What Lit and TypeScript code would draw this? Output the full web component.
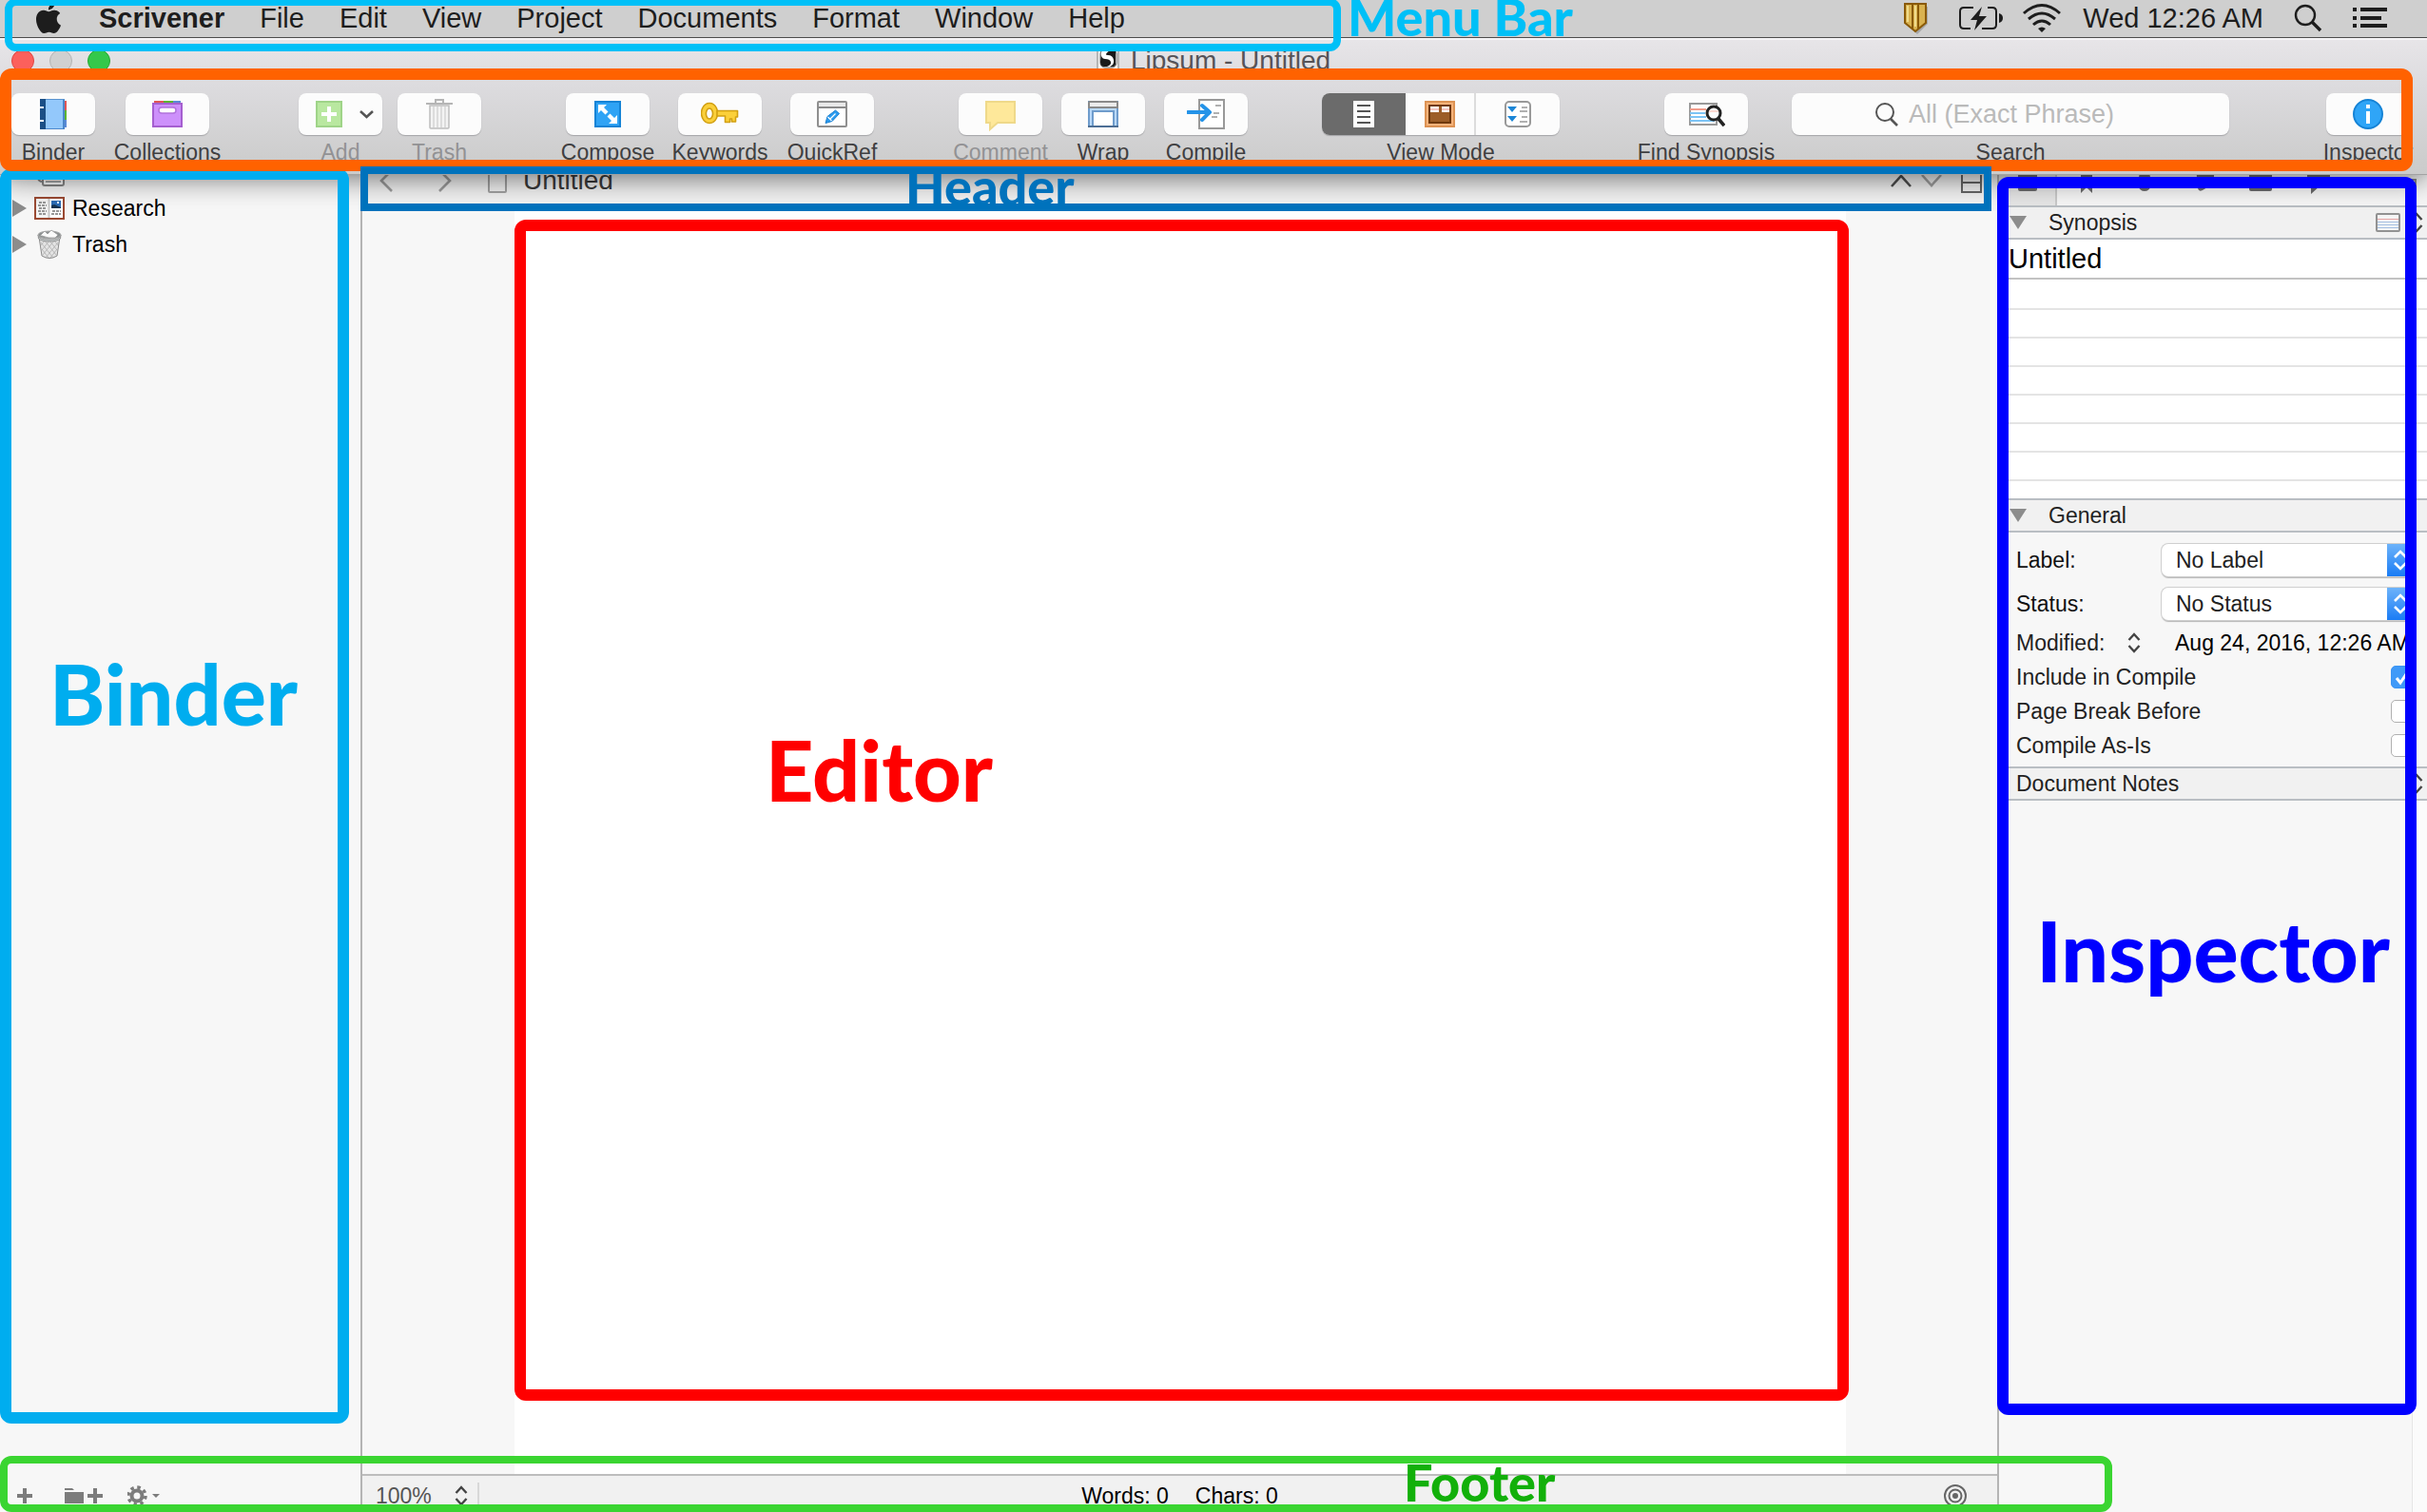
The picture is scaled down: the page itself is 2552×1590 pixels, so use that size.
import { LitElement, html, css, svg, nothing } from "lit";
import { customElement, property, state } from "lit/decorators.js";
import { classMap } from "lit/directives/class-map.js";

const MENUS = ["File", "Edit", "View", "Project", "Documents", "Format", "Window", "Help"];

const ICONS: Record<string, unknown> = {
  binder: svg`
    <rect x="11" y="2" width="21" height="32" fill="#93c8fb" />
    <rect x="30" y="2" width="2" height="32" fill="#4b87cc" />
    <rect x="11" y="2" width="21" height="1" fill="#5b94cf" /><rect x="11" y="33" width="21" height="1" fill="#4b87cc" />
    <rect x="6" y="2" width="6" height="32" fill="#1b4f86" />
    <rect x="6" y="10" width="4" height="2" fill="#fff" /><rect x="6" y="24" width="4" height="2" fill="#fff" />
    <rect x="32" y="4" width="2" height="10" fill="#e05555" /><rect x="32" y="14" width="2" height="10" fill="#5cb531" /><rect x="32" y="24" width="2" height="8" fill="#5b8ad6" />`,
  collections: svg`
    <rect x="6" y="4" width="10" height="3" fill="#e05555" /><rect x="16" y="4" width="10" height="3" fill="#5cb531" /><rect x="26" y="4" width="8" height="3" fill="#5b8ad6" />
    <rect x="5" y="7" width="30" height="24" fill="#cd90fb" stroke="#a55fd0" stroke-width="2" />
    <rect x="11" y="11" width="18" height="6" rx="3" fill="#fff" stroke="#b173dc" stroke-width="1.5" />`,
  add: svg`
    <rect x="19" y="5" width="26" height="26" fill="#b9e8a0" stroke="#9fd488" stroke-width="2" />
    <path d="M32 10v16M24 18h16" stroke="#fff" stroke-width="4" />
    <path d="M65 15l6.500 6l6.500 -6" fill="none" stroke="#555" stroke-width="2.600" />`,
  trash: svg`
    <path d="M16 6V3h8v3" fill="none" stroke="#b5b5b5" stroke-width="2" />
    <path d="M6 7h28" stroke="#b5b5b5" stroke-width="2" />
    <path d="M10 9h20v23q0 1-1 1H11q-1 0-1-1z" fill="#f3f3f3" stroke="#bdbdbd" stroke-width="1.500" />
    <path d="M14 10v22M18 10v22M22 10v22M26 10v22" stroke="#dcdcdc" stroke-width="2" />`,
  compose: svg`
    <rect x="7" y="5" width="26" height="26" fill="#2fa3f5" stroke="#1583d6" stroke-width="2" />
    <path d="M10 8h9l-3 3l4.500 4.500l-3 3L13 14l-3 3zM30 28h-9l3-3l-4.500-4.500l3-3L27 22l3-3z" fill="#fff" stroke="none" />`,
  key: svg`
    <path d="M9 6.500a8.500 10.500 0 1 0 .1 0zM9 12a3.500 5.500 0 1 1-.1 0z" fill="#fbd03a" stroke="#d2a012" stroke-width="1.600" fill-rule="evenodd" />
    <path d="M17 14.500h21.500v6.500h-2v5h-4v-3h-2v3.500h-5v-6.500H17z" fill="#fbd03a" stroke="#d2a012" stroke-width="1.600" stroke-linejoin="round" />`,
  quickref: svg`
    <rect x="5" y="5" width="30" height="26" rx="1" fill="#fff" stroke="#8f8f8f" stroke-width="2" />
    <rect x="6" y="6" width="28" height="4" fill="#e9e9e9" /><path d="M5 11h30" stroke="#8a8a8a" stroke-width="2" />
    <path d="M13 27.500l2-7l8.500-6.500l4 3.500l-7.500 8z" fill="#2b9bef" stroke="#1b7fd0" />
    <path d="M15.500 21l4 4M17.500 23.500l6-6" stroke="#fff" stroke-width="1.200" />`,
  comment: svg`<path d="M5 5h30v22H17l-8 7v-7H5z" fill="#fee89a" stroke="#efd98a" stroke-width="2" />`,
  wrap: svg`
    <rect x="5" y="5" width="30" height="26" fill="#b9d9fa" stroke="#6f9ccc" stroke-width="2" />
    <path d="M4 12V6q0-2 2-2h28q2 0 2 2v6z" fill="#8a8a8a" /><rect x="6" y="6" width="28" height="4" fill="#ececec" />
    <rect x="9" y="15" width="22" height="16" fill="#fff" stroke="#6f9ccc" stroke-width="2" />
    <path d="M4 31h32" stroke="#4d6f96" stroke-width="2" />`,
  compile: svg`
    <rect x="13" y="3" width="26" height="30" fill="#fff" stroke="#999" stroke-width="2" />
    <path d="M30 9h6M28 17h6M26 21h6" stroke="#b0b0b0" stroke-width="2" />
    <path d="M1 16h22M16 9l8 7l-8 8" fill="none" stroke="#2493e8" stroke-width="4" stroke-linecap="round" stroke-linejoin="round" />`,
  doc: svg`
    <rect x="9" y="4" width="22" height="28" fill="#fff" />
    <path d="M13 9h14M13 15h14M13 21h14M13 27h14" stroke="#555" stroke-width="2" />`,
  cork: svg`
    <rect x="5" y="5" width="30" height="26" fill="#f5b27a" stroke="#dd9354" stroke-width="2" />
    <rect x="9" y="9" width="22" height="18" fill="#9c5d27" stroke="#70390d" stroke-width="2" />
    <rect x="10" y="10" width="9" height="6" fill="#fff" /><rect x="22" y="10" width="8" height="6" fill="#fff" />
    <path d="M10 13h9M22 13h8" stroke="#f6c6c0" stroke-width="2" />`,
  outline: svg`
    <rect x="7" y="5" width="26" height="26" rx="4" fill="#fff" stroke="#999" stroke-width="2" />
    <path d="M9 10h10l-5 6zM9 20h10l-5 6z" fill="#1c86d6" />
    <path d="M24 11h6M22 15h8M24 21h6M22 26h8" stroke="#b0b0b0" stroke-width="2" />`,
  synopsis: svg`
    <rect x="3" y="7" width="28" height="22" fill="#fff" stroke="#999" stroke-width="2" />
    <path d="M3 13h17" stroke="#f09c8c" stroke-width="2" /><path d="M3 17h16M3 21h17M3 25h26" stroke="#7cc4f5" stroke-width="2" />
    <circle cx="28" cy="17" r="7" fill="#fbfbfb" stroke="#222" stroke-width="3" />
    <path d="M23 15h10" stroke="#fbd8d0" stroke-width="2" />
    <path d="M33 23l6 7" stroke="#222" stroke-width="3.600" />`,
  info: svg`
    <circle cx="20" cy="18" r="15" fill="#2fa5f7" stroke="#1583d6" stroke-width="2" />
    <rect x="18" y="8" width="4" height="4" fill="#fff" /><rect x="18" y="15" width="4" height="13" fill="#fff" />`,
};

const stepper = () => html`<svg width="14" height="22" viewBox="0 0 14 22" aria-hidden="true">
  <path d="M1.500 8L7 2l5.500 6M1.500 14L7 20l5.500 -6" fill="none" stroke="#444" stroke-width="2.400" />
</svg>`;

@customElement("tool-button")
class ToolButton extends LitElement {
  @property() label = "";
  @property() icon = "";
  @property({ type: Boolean }) disabled = false;

  static styles = css`
    :host {
      display: block;
      width: 88px;
      flex: none;
    }
    .tool {
      display: flex;
      flex-direction: column;
      align-items: center;
      gap: 5px;
      width: 100%;
      padding: 0;
      border: 0;
      background: none;
      color: #3f3f41;
      font: 23px/26px "Liberation Sans", Arial, sans-serif;
      white-space: nowrap;
    }
    .tool:disabled {
      color: #929294;
    }
    .face {
      display: flex;
      align-items: center;
      justify-content: center;
      width: 100%;
      height: 44px;
      border-radius: 8px;
      background: #fcfcfc;
      box-shadow: 0 1px 1px #a5a5a8;
    }
  `;

  render() {
    const w = this.icon === "add" ? 88 : 40;
    return html`<button class="tool" ?disabled=${this.disabled}>
      <span class="face">
        <svg width=${w} height="36" viewBox="0 0 ${w} 36" aria-hidden="true">${ICONS[this.icon]}</svg>
      </span>
      <span>${this.label}</span>
    </button>`;
  }
}

@customElement("app-root")
class AppRoot extends LitElement {
  @state() private mode = "doc";

  static styles = css`
    :host {
      display: block;
      position: relative;
      height: 100vh;
      overflow: hidden;
      background: #f7f7f7;
      color: #111;
      font: 23px/28px "Liberation Sans", Arial, sans-serif;
    }
    * {
      box-sizing: border-box;
    }
    svg {
      display: block;
      flex: none;
    }
    button,
    input,
    textarea,
    select {
      font: inherit;
      color: inherit;
      margin: 0;
      padding: 0;
      border: 0;
      border-radius: 0;
      background: none;
      outline: none;
    }
    .app {
      display: flex;
      flex-direction: column;
      height: 100%;
    }

    .menubar {
      display: flex;
      align-items: center;
      gap: 37px;
      height: 40px;
      flex: none;
      padding: 0 42px 2px 35px;
      border-bottom: 1px solid #4c4c4c;
      background: #cfcfcf;
      color: #1d1d1d;
      font-size: 29px;
      line-height: 30px;
      white-space: nowrap;
    }
    .brand {
      font-weight: bold;
    }
    .status {
      display: flex;
      align-items: center;
      gap: 32px;
      margin-left: auto;
    }
    .gauges {
      display: flex;
      align-items: center;
      gap: 20px;
    }
    .clock {
      margin-left: -10px;
    }

    .chrome {
      position: relative;
      z-index: 1;
      height: 144px;
      flex: none;
      border-top: 2px solid #f5f4f6;
      border-bottom: 1px solid #a2a2a2;
      background: linear-gradient(#e7e5e8, #dcdbde 35%, #cdcdcd 90%, #cbcbcb);
      box-shadow: 0 2px 30px rgba(0, 0, 0, 0.6);
      clip-path: inset(0 0 -60px 0);
    }
    .titlebar {
      display: grid;
      grid-template-columns: 1fr auto 1fr;
      align-items: center;
      height: 44px;
      padding: 0 12px;
    }
    .lights {
      display: flex;
      gap: 16px;
    }
    .light {
      width: 24px;
      height: 24px;
      border: 1px solid #df4744;
      border-radius: 50%;
      background: #fc605c;
    }
    .idle {
      border-color: #b4b4b4;
      background: #d0d0d0;
    }
    .zoom {
      border-color: #24a732;
      background: #34c84a;
    }
    .title {
      display: flex;
      align-items: center;
      gap: 12px;
      color: #565358;
      font-size: 28px;
    }
    .tools {
      display: flex;
      align-items: flex-start;
      padding: 12px 18px 0 12px;
    }
    .group {
      display: flex;
      gap: 30px;
    }
    .tight {
      gap: 16px;
    }
    .late {
      gap: 20px;
    }
    .spaced {
      margin-left: 89px;
    }
    .first {
      gap: 32px;
      margin-right: 5px;
    }
    .modes,
    .finder {
      display: flex;
      flex-direction: column;
      align-items: center;
      gap: 5px;
      color: #3f3f41;
      line-height: 26px;
    }
    .modes {
      width: 250px;
      margin-left: 78px;
      margin-right: 110px;
    }
    .segments {
      display: grid;
      grid-template-columns: 88px 74px 1fr;
      width: 100%;
      height: 44px;
      overflow: hidden;
      border-radius: 8px;
      background: #fcfcfc;
      box-shadow: 0 1px 1px #a5a5a8;
    }
    .segment {
      display: flex;
      align-items: center;
      justify-content: center;
    }
    .segment + .segment {
      border-right: 2px solid #dcdcdc;
    }
    .segment:last-child {
      border-right: 0;
    }
    .on {
      background: #6b6b6b;
    }
    .finder {
      flex: 1;
      margin: 0 102px 0 46px;
    }
    .search {
      display: flex;
      align-items: center;
      justify-content: center;
      gap: 10px;
      width: 100%;
      height: 44px;
      border-radius: 8px;
      background: #fcfcfc;
      box-shadow: 0 1px 1px #a5a5a8;
    }
    .query {
      width: 250px;
      font-size: 27px;
    }
    .query::placeholder {
      color: #bababa;
      opacity: 1;
    }

    .body {
      display: grid;
      grid-template-columns: 381px minmax(0, 1fr) 452px;
      flex: 1;
      min-height: 0;
      margin-top: -22px;
    }
    .column {
      display: flex;
      flex-direction: column;
      min-width: 0;
      min-height: 0;
    }
    .binder {
      border-right: 2px solid #b4b4b4;
    }
    .tree {
      flex: 1;
      margin: 0;
      padding: 0;
      list-style: none;
      color: #000;
    }
    .node {
      display: flex;
      align-items: center;
      gap: 8px;
      height: 38px;
      padding-left: 13px;
    }
    .actions {
      display: flex;
      align-items: center;
      gap: 24px;
      height: 38px;
      padding: 4px 0 0 16px;
    }

    .crumbs {
      display: flex;
      align-items: center;
      height: 60px;
      padding: 0 16px 4px 18px;
      flex: none;
      color: #3a3a3a;
      font-size: 28px;
      background: #f3f3f3;
    }
    .nav {
      display: flex;
      gap: 48px;
      margin-right: 38px;
    }
    .docname {
      flex: 1;
      margin-left: 17px;
    }
    .panes {
      display: flex;
      align-items: center;
      gap: 10px;
    }
    .split {
      margin-left: 10px;
    }
    .page {
      width: 1400px;
      max-width: 100%;
      flex: 1;
      align-self: center;
      padding: 40px;
      background: #fff;
      resize: none;
    }
    .statusbar {
      display: grid;
      grid-template-columns: 1fr auto 1fr;
      align-items: center;
      height: 40px;
      flex: none;
      padding: 4px 14px 0;
      border-top: 2px solid #bdbdbd;
      background: #f1f1f1;
      white-space: nowrap;
    }
    .scale {
      display: flex;
      align-items: center;
      gap: 24px;
      color: #555;
    }
    .rule {
      width: 2px;
      height: 28px;
      margin-left: -14px;
      background: #d8d8d8;
    }
    .counts {
      display: flex;
      gap: 28px;
      color: #000;
    }
    .target {
      justify-self: end;
      margin-right: 18px;
    }

    .inspector {
      border-left: 2px solid #b4b4b4;
    }
    .tabs {
      display: flex;
      height: 54px;
      flex: none;
      background: #f6f6f6;
    }
    .tab {
      display: flex;
      align-items: center;
      justify-content: center;
      width: 61px;
    }
    .tab:first-child {
      border-right: 2px solid #c9c9c9;
      background: #e6e6e6;
    }
    .tab:last-child {
      margin-left: auto;
      width: 34px;
    }
    .head {
      display: flex;
      align-items: center;
      gap: 22px;
      height: 36px;
      flex: none;
      margin: 0;
      padding: 0 4px 0 10px;
      border: solid #b9bec3;
      border-width: 2px 0;
      background: #f1f1f1;
      color: #222;
      font: inherit;
    }
    .plain {
      padding-left: 18px;
    }
    .push {
      display: flex;
      align-items: center;
      gap: 10px;
      margin-left: auto;
    }
    .card-title {
      width: 100%;
      height: 42px;
      padding: 0 10px;
      flex: none;
      border-bottom: 2px solid #c2c2c2;
      background: #fff;
      color: #000;
      font-size: 29px;
    }
    .card {
      width: 100%;
      height: 230px;
      flex: none;
      padding: 0 10px;
      background: linear-gradient(#fff, #fff) 0 0 / 100% 30px no-repeat, linear-gradient(#e4e4e4 2px, #fff 2px) 0 0 / 100% 30px;
      line-height: 30px;
      resize: none;
    }
    .fields {
      padding: 6px 14px 4px 18px;
      color: #111;
    }
    .field {
      display: grid;
      grid-template-columns: 153px 1fr;
      align-items: center;
      height: 46px;
    }
    .picker {
      display: grid;
      grid-template-columns: 1fr 28px;
      height: 34px;
      overflow: hidden;
      border-radius: 7px;
      background: #fff;
      box-shadow: 0 0 0 1px #cfcfcf, 0 2px 1px #b5b5b5;
    }
    .choice {
      grid-area: 1 / 1 / 2 / 3;
      appearance: none;
      padding-left: 15px;
      color: #222;
    }
    .arrows {
      display: grid;
      grid-area: 1 / 2;
      place-items: center;
      background: linear-gradient(#6db3fa, #1a7cf5);
      pointer-events: none;
    }
    .line {
      display: flex;
      align-items: center;
      justify-content: space-between;
      height: 36px;
      color: #222;
      white-space: nowrap;
    }
    .kind {
      display: flex;
      align-items: center;
      gap: 24px;
      width: 167px;
      flex: none;
    }
    .date {
      flex: 1;
      color: #000;
    }
    .tick {
      display: grid;
      width: 24px;
      height: 24px;
    }
    .box {
      grid-area: 1 / 1;
      width: 24px;
      height: 24px;
      appearance: none;
      border: 1px solid #b0b0b0;
      border-radius: 5px;
      background: #fff;
    }
    .box:checked {
      border-color: #3a95f5;
      background: #3f9af8;
    }
    .mark {
      grid-area: 1 / 1;
      pointer-events: none;
    }
    .notes {
      display: flex;
      flex: 1;
      min-height: 0;
    }
    .notes-text {
      flex: 1;
      min-width: 0;
      padding: 8px;
      resize: none;
    }
    .gutter {
      width: 16px;
      border-left: 1px solid #e6e6e6;
      background: #fbfbfb;
    }

    /* Callout frames laid over the window */
    .frame {
      position: absolute;
      z-index: 2;
      border: 12px solid;
      border-radius: 12px;
      pointer-events: none;
    }
    .thin {
      border-width: 8px;
    }
    .f-menu {
      inset: -2px 1142px auto 5px;
      height: 56px;
      color: #00c0f7;
    }
    .f-binder {
      inset: 177px auto 93px 0;
      width: 367px;
      color: #00adef;
    }
    .f-tools {
      inset: 72px 15px auto 0;
      height: 108px;
      color: #ff6200;
    }
    .f-header {
      inset: 175px 458px auto 379px;
      height: 47px;
      border-radius: 0;
      color: #0072bc;
    }
    .f-editor {
      inset: 231px 608px 117px 541px;
      color: #f00;
    }
    .f-inspector {
      inset: 186px 11px 102px auto;
      width: 441px;
      color: #00f;
    }
    .f-footer {
      inset: auto 331px 0 0;
      height: 59px;
      color: #3ad531;
    }
    .note {
      position: absolute;
      z-index: 2;
      font: 900 54px/36px Lato, sans-serif;
      white-space: nowrap;
      pointer-events: none;
    }
    .big {
      font-size: 88px;
      line-height: 86px;
    }
    .n-menu {
      top: 0;
      left: 1417px;
      color: #00c0f7;
    }
    .n-header {
      top: 178px;
      left: 952px;
      color: #0072bc;
    }
    .n-binder {
      top: 686px;
      left: 52px;
      color: #00adef;
    }
    .n-editor {
      top: 766px;
      left: 805px;
      color: #f00;
    }
    .n-inspector {
      top: 956px;
      right: 39px;
      color: #00f;
    }
    .n-footer {
      bottom: 13px;
      left: 1476px;
      color: #12b00a;
    }
  `;

  private menubar() {
    return html`<nav class="menubar" aria-label="Menu bar">
      <svg width="32" height="32" viewBox="0 0 24 24" aria-hidden="true">
        <path
          fill="#1d1d1d"
          d="M12.152 6.896c-.948 0-2.415-1.078-3.96-1.04-2.04.027-3.91 1.183-4.961 3.014-2.117 3.675-.546 9.103 1.519 12.09 1.013 1.454 2.208 3.09 3.792 3.039 1.520-.065 2.090-.987 3.935-.987 1.831 0 2.350.987 3.960.948 1.637-.026 2.676-1.480 3.676-2.948 1.156-1.688 1.636-3.325 1.662-3.415-.039-.013-3.182-1.221-3.220-4.857-.026-3.040 2.480-4.494 2.597-4.559-1.429-2.090-3.623-2.324-4.390-2.376-2-.156-3.675 1.090-4.610 1.090zM15.530 3.830c.843-1.012 1.400-2.427 1.245-3.830-1.207.052-2.662.805-3.532 1.818-.780.896-1.454 2.338-1.273 3.714 1.338.104 2.715-.688 3.559-1.701"
        />
      </svg>
      <button class="brand">Scrivener</button>
      ${MENUS.map((m) => html`<button>${m}</button>`)}
      <div class="status">
        <svg width="26" height="34" viewBox="0 0 26 34" aria-hidden="true">
          <path d="M3 5h22v18L14 34L3 24z" fill="#8b8b8b" opacity=".6" />
          <path d="M1 2h22v20L12 31L1 22z" fill="#d9b250" stroke="#8a5a06" stroke-width="2" />
          <path d="M9 3v25M15 3v25" stroke="#8a5a06" stroke-width="2" />
          <path d="M4 4v17M12 4v22" stroke="#f0dc8c" stroke-width="2" />
        </svg>
        <div class="gauges">
          <svg width="46" height="26" viewBox="0 0 46 26" fill="none" aria-hidden="true">
            <path d="M15 2H5Q1 2 1 6v14q0 4 4 4h7M30 2h5q4 0 4 4v14q0 4-4 4H24" stroke="#1d1d1d" stroke-width="2" />
            <path d="M24 1L12 15h7l-3 11l13-15h-8z" fill="#1d1d1d" />
            <path d="M42 8q4 1 4 5t-4 5z" fill="#1d1d1d" />
          </svg>
          <svg width="42" height="32" viewBox="0 0 42 32" fill="none" stroke="#1d1d1d" stroke-width="3" aria-hidden="true">
            <path d="M2 11Q21 -6 40 11M7 17Q21 5 35 17M12 23Q21 15 30 23" />
            <path d="M21 31l-4-4q4-3 8 0z" fill="#1d1d1d" stroke="none" />
          </svg>
        </div>
        <span class="clock">Wed 12:26 AM</span>
        <svg width="30" height="30" viewBox="0 0 30 30" fill="none" stroke="#1d1d1d" aria-hidden="true">
          <circle cx="12" cy="12" r="10" stroke-width="2.400" /><path d="M19 19l9 9" stroke-width="3.400" />
        </svg>
        <svg width="36" height="22" viewBox="0 0 36 22" fill="#1d1d1d" aria-hidden="true">
          <path d="M0 0h4v4H0zM0 9h4v4H0zM0 17h4v4H0zM8 0h28v4H8zM8 9h22v4H8zM8 17h28v4H8z" />
        </svg>
      </div>
    </nav>`;
  }

  private chrome() {
    return html`<header class="chrome">
      <div class="titlebar">
        <div class="lights"><span class="light"></span><span class="light idle"></span><span class="light zoom"></span></div>
        <div class="title">
          <svg width="24" height="36" viewBox="0 0 24 36" aria-hidden="true">
            <rect x="1" y="1" width="22" height="34" fill="#f4f4f4" stroke="#a5a5a5" stroke-width="1.500" />
            <rect x="4" y="6" width="17" height="19" rx="5" fill="#fff" stroke="#666" />
            <path d="M5 8q-1 8 4 8t6 3t-4 5H8q-4 0-4-5zM20 8v14q-1 3-6 2q5-2 4-7t-6-5t2-5z" fill="#1a1a1a" />
            <path d="M4 30h16" stroke="#777" stroke-width="4" stroke-dasharray="2 1" />
          </svg>
          <span>Lipsum - Untitled</span>
        </div>
      </div>
      <div class="tools">
        <div class="group first">
          <tool-button label="Binder" icon="binder"></tool-button>
          <tool-button label="Collections" icon="collections"></tool-button>
        </div>
        <div class="group tight spaced">
          <tool-button label="Add" icon="add" disabled></tool-button>
          <tool-button label="Trash" icon="trash" disabled></tool-button>
        </div>
        <div class="group spaced">
          <tool-button label="Compose" icon="compose"></tool-button>
          <tool-button label="Keywords" icon="key"></tool-button>
          <tool-button label="QuickRef" icon="quickref"></tool-button>
        </div>
        <div class="group late spaced">
          <tool-button label="Comment" icon="comment" disabled></tool-button>
          <tool-button label="Wrap" icon="wrap"></tool-button>
          <tool-button label="Compile" icon="compile"></tool-button>
        </div>
        <div class="modes">
          <div class="segments" role="group" aria-labelledby="mode-label">
            ${["doc", "cork", "outline"].map(
              (m) => html`<button
                class=${classMap({ segment: true, on: this.mode === m })}
                aria-pressed=${this.mode === m}
                @click=${() => (this.mode = m)}
              >
                <svg width="40" height="36" viewBox="0 0 40 36" aria-hidden="true">${ICONS[m]}</svg>
              </button>`
            )}
          </div>
          <span id="mode-label">View Mode</span>
        </div>
        <tool-button label="Find Synopsis" icon="synopsis"></tool-button>
        <div class="finder">
          <div class="search">
            <svg width="26" height="26" viewBox="0 0 26 26" fill="none" stroke="#555" stroke-width="2" aria-hidden="true">
              <circle cx="11" cy="11" r="9" /><path d="M17 18l7 7" stroke-width="2.600" />
            </svg>
            <input class="query" id="query" type="text" placeholder="All (Exact Phrase)" />
          </div>
          <label for="query">Search</label>
        </div>
        <tool-button label="Inspector" icon="info"></tool-button>
      </div>
    </header>`;
  }

  private binder() {
    const arrow = html`<svg width="15" height="18" viewBox="0 0 15 18" aria-hidden="true"><path d="M0 0l15 9L0 18z" fill="#8c8c8c" /></svg>`;
    return html`<aside class="column binder">
      <ul class="tree">
        <li class="node">
          <svg width="15" height="18" aria-hidden="true"></svg>
          <svg width="32" height="32" viewBox="0 0 32 32" fill="#fff" stroke="#888" stroke-width="2" aria-hidden="true">
            <path d="M4 4h20v22H9q-5 0-5-5z" /><rect x="9" y="8" width="22" height="22" rx="2" />
            <path d="M12 18h16M12 22h16M12 26h16" stroke="#aaa" />
          </svg>
        </li>
        <li class="node">
          ${arrow}
          <svg width="32" height="24" viewBox="0 0 32 24" aria-hidden="true">
            <rect width="32" height="24" fill="#9b4a33" />
            <rect x="2" y="2" width="14" height="20" fill="#f4f4f4" /><rect x="16" y="2" width="14" height="20" fill="#fff" />
            <path d="M15.500 2v20" stroke="#c9c9c9" stroke-width="2" />
            <path d="M5 6h8M4 9h9M5 12h8M4 15h9M5 18h8M19 15h9M18 18h10" stroke="#777" stroke-width="1.400" stroke-dasharray="3 1" />
            <rect x="18" y="4" width="10" height="8" fill="#2c6cb5" /><path d="M18 12v-3l3-1l7 3v1z" fill="#16324f" />
            <rect x="24" y="5" width="2" height="2" fill="#fff" />
          </svg>
          <span>Research</span>
        </li>
        <li class="node">
          ${arrow}
          <svg width="32" height="32" viewBox="0 0 32 32" aria-hidden="true">
            <path d="M5 8l3 20q8 5 16 0l3-20z" fill="#e4e4e4" stroke="#8a8a8a" />
            <path
              d="M7 14l13 16M11 12l12 15M16 12l8 10M21 12l4 5M8 21l7 9M25 14L12 30M21 12L9 27M16 12L8 22M11 12l-4 5M24 21l-7 9"
              stroke="#a8a8a8"
              stroke-width=".7"
            />
            <path d="M4 6q0 5 12 5t12-5l-.5 4q-3 3-11.500 3T4.500 10z" fill="#c6cccd" stroke="#888" stroke-width=".8" />
            <ellipse cx="16" cy="6" rx="12" ry="4" fill="#8b9091" stroke="#aaa" />
            <path d="M6 7l5-5l3 3l4-4l7 5l-3 3q-7 1-14-2z" fill="#fafafa" stroke="#999" stroke-width=".8" />
          </svg>
          <span>Trash</span>
        </li>
      </ul>
      <div class="actions">
        <button aria-label="Add document">
          <svg width="20" height="20" viewBox="0 0 20 20"><path d="M10 2v16M2 10h16" stroke="#7c7c7c" stroke-width="4" /></svg>
        </button>
        <button aria-label="Add folder">
          <svg width="50" height="20" viewBox="0 0 50 20">
            <path d="M8 2h8l2 2H8zM8 6h20v12H8z" fill="#7c7c7c" /><path d="M40 2v16M32 10h16" stroke="#7c7c7c" stroke-width="4" />
          </svg>
        </button>
        <button aria-label="Actions">
          <svg width="50" height="22" viewBox="0 0 50 22">
            <g fill="none" stroke="#7c7c7c">
              <circle cx="10" cy="11" r="5.500" stroke-width="4" />
              <circle cx="10" cy="11" r="9" stroke-width="3.500" stroke-dasharray="3.500 3.568" />
            </g>
            <path d="M26 9h8l-4 4z" fill="#7c7c7c" />
          </svg>
        </button>
      </div>
    </aside>`;
  }

  private editor() {
    const chev = (d: string, c: string, label: string, w: number, h: number) =>
      html`<button aria-label=${label}><svg width=${w} height=${h} viewBox="0 0 ${w} ${h}"><path d=${d} fill="none" stroke=${c} stroke-width="2.600" /></svg></button>`;
    return html`<main class="column">
      <div class="crumbs">
        <div class="nav">
          ${chev("M13 1L2 12L13 23", "#9d9d9d", "Back", 14, 24)} ${chev("M1 1L12 12L1 23", "#9d9d9d", "Forward", 14, 24)}
        </div>
        <svg width="20" height="26" viewBox="0 0 20 26" aria-hidden="true">
          <rect x="1" y="1" width="18" height="24" rx="1" fill="#f4f4f4" stroke="#a3a3a3" stroke-width="2" />
        </svg>
        <span class="docname">Untitled</span>
        <div class="panes">
          ${chev("M1 13L11 2L21 13", "#4e4e4e", "Previous document", 22, 14)} ${chev("M1 1L11 12L21 1", "#a0a0a0", "Next document", 22, 14)}
          <button class="split" aria-label="Split editor">
            <svg width="22" height="26" viewBox="0 0 22 26" fill="none" stroke="#666" stroke-width="2">
              <path d="M1 1h20v24H1zM1 15h20" />
            </svg>
          </button>
        </div>
      </div>
      <textarea class="page" aria-label="Document text"></textarea>
      <footer class="statusbar">
        <div class="scale"><span>100%</span>${stepper()}<span class="rule"></span></div>
        <div class="counts"><span>Words: 0</span><span>Chars: 0</span></div>
        <button class="target" aria-label="Target">
          <svg width="24" height="24" viewBox="0 0 24 24" fill="none" stroke="#666" stroke-width="2">
            <circle cx="12" cy="12" r="11" /><circle cx="12" cy="12" r="6.500" /><circle cx="12" cy="12" r="2" fill="#666" />
          </svg>
        </button>
      </footer>
    </main>`;
  }

  private picker(id: string, label: string, value: string) {
    return html`<div class="field">
      <label for=${id}>${label}</label>
      <div class="picker">
        <select class="choice" id=${id}>
          <option>${value}</option>
        </select>
        <span class="arrows">
          <svg width="16" height="22" viewBox="0 0 16 22" fill="none" stroke="#fff" stroke-width="2.600" aria-hidden="true">
            <path d="M2 8l6-6l6 6M2 14l6 6l6-6" />
          </svg>
        </span>
      </div>
    </div>`;
  }

  private tick(id: string, label: string, checked: boolean) {
    return html`<div class="line">
      <label for=${id}>${label}</label>
      <span class="tick">
        <input class="box" id=${id} type="checkbox" .checked=${checked} />
        ${checked
          ? html`<svg class="mark" width="24" height="24" viewBox="0 0 24 24" aria-hidden="true">
              <path d="M6 13l4 5l8-12" fill="none" stroke="#fff" stroke-width="3" />
            </svg>`
          : nothing}
      </span>
    </div>`;
  }

  private inspector() {
    const glyphs = [
      "M2 4h20v22q0 2-2 2H4q-2 0-2-2z",
      "M6 2h12v28l-6-6l-6 6z",
      "M12 2q7 6 7 20q-2 6-7 6t-7-6Q5 8 12 2z",
      "M5 2h19v18L12 27q-4 2-5-2z",
      "M0 8h24v18q0 2-2 2H2q-2 0-2-2z",
      "M0 4h24v18H14L4 31v-9H0z",
    ];
    const caret = html`<svg width="20" height="16" viewBox="0 0 20 16" aria-hidden="true"><path d="M1 1h18l-9 14z" fill="#8c8c8c" /></svg>`;
    return html`<aside class="column inspector">
      <div class="tabs">
        ${glyphs.map(
          (d, i) => html`<button class="tab" aria-label="Inspector pane ${i + 1}">
            <svg width="24" height="32" viewBox="0 0 24 32"><path d=${d} fill="#6a6a6a" /></svg>
          </button>`
        )}
        <button class="tab" aria-label="Lock inspector">
          <svg width="16" height="24" viewBox="0 0 16 24"><path d="M3 20V12h10v8" fill="none" stroke="#888" stroke-width="2" /></svg>
        </button>
      </div>
      <h2 class="head">
        ${caret}<span>Synopsis</span>
        <span class="push">
          <svg width="26" height="20" viewBox="0 0 26 20" aria-hidden="true">
            <rect x="1" y="1" width="24" height="18" rx="1" fill="#f6f6f6" stroke="#929292" stroke-width="2" />
            <path d="M2 6.500h22" stroke="#e8a5a5" /><path d="M2 9.500h22M2 12.500h22M2 15.500h22" stroke="#a3bfe2" />
          </svg>
          ${stepper()}
        </span>
      </h2>
      <input class="card-title" aria-label="Synopsis title" type="text" .value=${"Untitled"} />
      <textarea class="card" aria-label="Synopsis"></textarea>
      <h2 class="head">${caret}<span>General</span></h2>
      <div class="fields">
        ${this.picker("label", "Label:", "No Label")} ${this.picker("status", "Status:", "No Status")}
        <div class="line">
          <span class="kind">Modified: ${stepper()}</span>
          <span class="date">Aug 24, 2016, 12:26 AM</span>
        </div>
        ${this.tick("include", "Include in Compile", true)} ${this.tick("break", "Page Break Before", false)}
        ${this.tick("asis", "Compile As-Is", false)}
      </div>
      <h2 class="head plain"><span>Document Notes</span><span class="push">${stepper()}</span></h2>
      <div class="notes">
        <textarea class="notes-text" aria-label="Document notes"></textarea>
        <div class="gutter"></div>
      </div>
    </aside>`;
  }

  render() {
    return html`
      <div class="app">
        ${this.menubar()} ${this.chrome()}
        <div class="body">${this.binder()} ${this.editor()} ${this.inspector()}</div>
      </div>
      <div class="frame thin f-menu"></div>
      <div class="frame f-binder"></div>
      <div class="frame f-tools"></div>
      <div class="note n-header">Header</div>
      <div class="frame thin f-header"></div>
      <div class="frame f-editor"></div>
      <div class="frame f-inspector"></div>
      <div class="frame thin f-footer"></div>
      <div class="note n-menu">Menu Bar</div>
      <div class="note big n-binder">Binder</div>
      <div class="note big n-editor">Editor</div>
      <div class="note big n-inspector">Inspector</div>
      <div class="note n-footer">Footer</div>
    `;
  }
}
